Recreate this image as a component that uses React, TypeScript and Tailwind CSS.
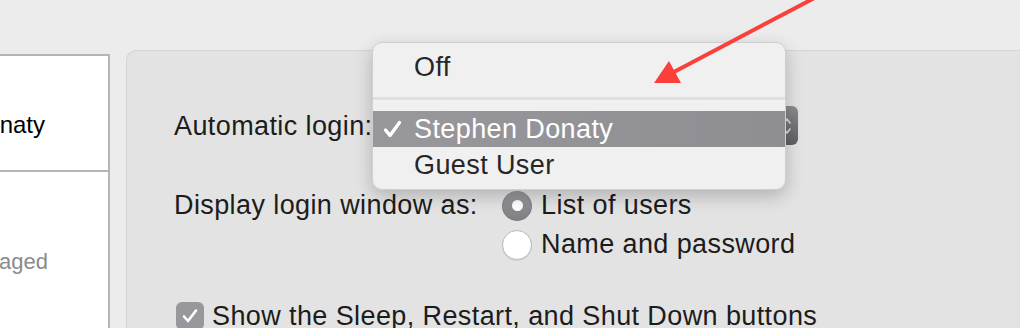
import React from 'react';

function Radio({ checked }: { checked?: boolean }) {
  if (checked) {
    return (
      <span className="flex items-center justify-center w-[30px] h-[30px] rounded-full bg-gradient-to-b from-[#9a999e] to-[#7f7e83] shadow-[inset_0_0_0_1px_rgba(0,0,0,0.08)]">
        <span className="w-[11px] h-[11px] rounded-full bg-white" />
      </span>
    );
  }
  return <span className="w-[30px] h-[30px] rounded-full bg-white border border-[#b9b9b9] shadow-[0_1px_1px_rgba(0,0,0,0.08)]" />;
}

export default function App() {
  return (
    <div className="relative w-[1020px] h-[328px] overflow-hidden bg-[#ececec] flex font-['Liberation_Sans',Arial,sans-serif] text-[#1c1c1c]">
      {/* Users list (clipped) */}
      <div className="w-[110px] shrink-0 mt-[54px] bg-white border-t-2 border-r-2 border-[#b5b5b5] flex flex-col">
        <div className="h-[116px] border-b-2 border-[#b5b5b5] flex items-center justify-end overflow-hidden whitespace-nowrap pr-[63px] pt-[24px] text-[24px] text-black">
          Stephen Donaty
        </div>
        <div className="h-[106px] flex items-end justify-end overflow-hidden whitespace-nowrap pr-[60px] text-[22px] text-[#8b8b8b]">
          Managed
        </div>
      </div>

      {/* Settings panel */}
      <div className="ml-[16px] mt-[50px] flex-1 rounded-tl-[10px] bg-[#e3e3e3] border-t border-l border-[#d4d4d4] pl-[47px] pt-[55px] text-[27px] tracking-[0.4px]">
        <div className="flex items-center h-[39px]">
          <span className="w-[204px] shrink-0 pt-[1px]">Automatic login:</span>
          <div className="w-[420px] h-[39px] rounded-[6px] bg-gradient-to-b from-[#8c8b90] to-[#5f5e63] flex items-center justify-end pr-[6px]">
            <svg width="10" height="22" viewBox="0 0 10 22" fill="none" stroke="#dcdcdc" strokeWidth="1.6" strokeLinecap="round" strokeLinejoin="round">
              <path d="M2 8 L5 4 L8 8" />
              <path d="M2 14 L5 18 L8 14" />
            </svg>
          </div>
        </div>

        <div className="flex mt-[41px]">
          <span className="w-[328px] shrink-0 h-[39px] flex items-center">Display login window as:</span>
          <div className="flex flex-col">
            <div className="flex items-center gap-[9px] h-[39px]">
              <Radio checked />
              <span>List of users</span>
            </div>
            <div className="flex items-center gap-[9px] h-[39px]">
              <Radio />
              <span>Name and password</span>
            </div>
          </div>
        </div>

        <div className="flex items-center gap-[8px] mt-[32px] ml-[2px]">
          <span className="w-[28px] h-[28px] shrink-0 rounded-[6px] bg-[#98979c] flex items-center justify-center">
            <svg width="18" height="16" viewBox="0 0 18 16" fill="none" stroke="white" strokeWidth="2.6" strokeLinecap="round" strokeLinejoin="round">
              <path d="M3 8.5 L7 13 L15 2.5" />
            </svg>
          </span>
          <span className="whitespace-nowrap">Show the Sleep, Restart, and Shut Down buttons</span>
        </div>
      </div>

      {/* Open popup menu */}
      <div className="absolute left-[372px] top-[42px] w-[414px] h-[148px] rounded-[10px] bg-[#f0f0f0] border border-[#cfcfcf] shadow-[0_6px_18px_rgba(0,0,0,0.22)] pt-[6px] text-[27px] tracking-[0.4px] text-[#262626]">
        <div className="h-[36px] flex items-center pl-[41px]">Off</div>
        <div className="h-[26px] flex items-center">
          <div className="w-full h-[3px] bg-[#dfdfdf]" />
        </div>
        <div className="h-[36px] flex items-center bg-gradient-to-r from-[#98979c] to-[#8f8e93] text-white">
          <span className="w-[41px] pl-[10px] flex items-center">
            <svg width="19" height="18" viewBox="0 0 19 18" fill="none" stroke="white" strokeWidth="3.4" strokeLinecap="round" strokeLinejoin="round">
              <path d="M2.5 10 L7 15.5 L16.5 2.5" />
            </svg>
          </span>
          <span>Stephen Donaty</span>
        </div>
        <div className="h-[36px] flex items-center pl-[41px]">Guest User</div>
      </div>

      {/* Annotation arrow */}
      <svg className="absolute left-0 top-0" width="1020" height="328" viewBox="0 0 1020 328">
        <line x1="822" y1="-6" x2="672" y2="73" stroke="#fb3f3b" strokeWidth="4" />
        <polygon points="654,83 669,61 681,83" fill="#fb3f3b" />
      </svg>
    </div>
  );
}
